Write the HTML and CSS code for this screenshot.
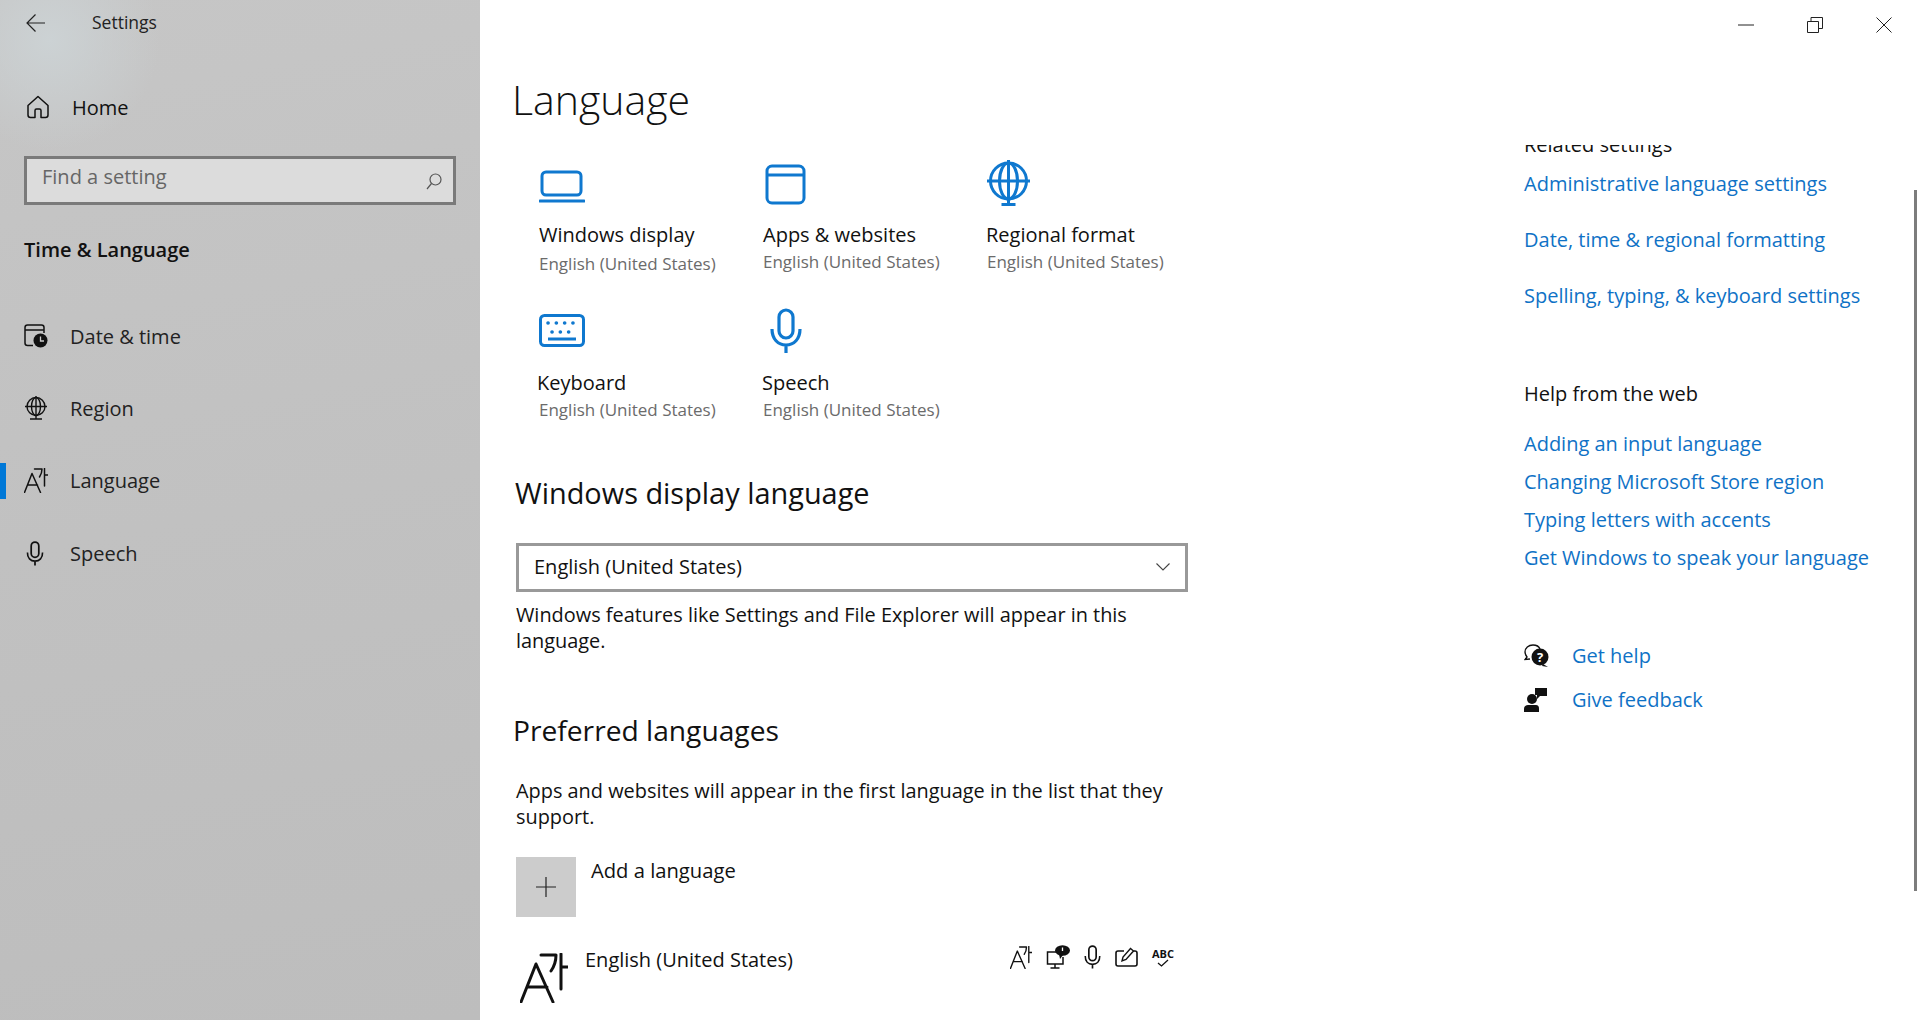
FILE: index.html
```html
<!DOCTYPE html>
<html lang="en">
<head>
<meta charset="utf-8">
<title>Settings</title>
<link rel="stylesheet" href="styles.css">
</head>
<body>
<svg class="defs" width="0" height="0" aria-hidden="true">
  <symbol id="i-aga" viewBox="0 0 48 50">
    <path d="M1 49 16 11 33 49M7 34H27M21 2H36C36 8 34.500 13 31 18M41 1V36M41 14H48" fill="none" stroke="currentColor" stroke-width="3" stroke-linecap="round" stroke-linejoin="round"/>
  </symbol>
  <symbol id="i-mic" viewBox="0 0 32 46">
    <rect x="9" y="2" width="14" height="28" rx="7" fill="none" stroke="currentColor" stroke-width="3.2"/>
    <path d="M2 21C2 31 8 37 16 37S30 31 30 21M16 37V45" fill="none" stroke="currentColor" stroke-width="3.2"/>
  </symbol>
</svg>
<div class="window">
  <aside class="sidebar">
    <div class="app-bar">
      <svg class="back" width="20" height="18" viewBox="0 0 20 18"><path d="M9.500 .5 1 9l8.500 8.500M1 9h18" fill="none" stroke="#222" stroke-width="1.200"/></svg>
      <span class="app-title">Settings</span>
    </div>
    <div class="home">
      <svg width="24" height="24" viewBox="0 0 24 24"><path d="M9 22.500H4.500C2.800 22.500 2 21.500 2 20V10.500L12 1.500l10 9V20c0 1.500-.8 2.500-2.500 2.500H15V15.500C15 14.500 14.500 14 13.500 14h-3C9.500 14 9 14.500 9 15.500Z" fill="none" stroke="#111" stroke-width="1.500" stroke-linejoin="round"/></svg>
      <span>Home</span>
    </div>
    <div class="search">
      <span>Find a setting</span>
      <svg width="16" height="17" viewBox="0 0 16 17"><circle cx="9.500" cy="6.500" r="5.500" fill="none" stroke="#555" stroke-width="1.200"/><path d="M5.500 10.500 1 16" stroke="#555" stroke-width="1.200"/></svg>
    </div>
    <div class="section-title">Time &amp; Language</div>
    <nav class="nav">
      <div class="nav-item">
        <svg width="24" height="24" viewBox="0 0 24 24"><path d="M9 21.500H3.500C2 21.500 1 20.500 1 19V3.500C1 2 2 1 3.500 1h14C19 1 20 2 20 3.500V9M1 6H20" fill="none" stroke="#111" stroke-width="1.500"/><circle cx="16.500" cy="16.500" r="7" fill="#111"/><path d="M16.500 12.500V17H20" fill="none" stroke="#ccc" stroke-width="1.300"/></svg>
        <span>Date &amp; time</span>
      </div>
      <div class="nav-item">
        <svg width="24" height="24" viewBox="0 0 24 24"><circle cx="12" cy="10.500" r="9" fill="none" stroke="#111" stroke-width="1.400"/><ellipse cx="12" cy="10.500" rx="4.500" ry="9" fill="none" stroke="#111" stroke-width="1.400"/><path d="M1 10.500H23M12 0V23M6 23H18" fill="none" stroke="#111" stroke-width="1.400"/></svg>
        <span>Region</span>
      </div>
      <div class="nav-item active">
        <svg class="ic-black" width="24" height="25"><use href="#i-aga"/></svg>
        <span>Language</span>
      </div>
      <div class="nav-item">
        <svg class="ic-black nudge-nav-mic" width="18" height="25" viewBox="0 0 32 46"><use href="#i-mic"/></svg>
        <span>Speech</span>
      </div>
    </nav>
  </aside>
  <main class="main">
    <div class="caption">
      <svg width="16" height="2" viewBox="0 0 16 2"><path d="M0 1H16" stroke="#222" stroke-width="1"/></svg>
      <svg width="16" height="16" viewBox="0 0 16 16"><path d="M.5 4.500h11v11H.5ZM4 4.500V.5h11.500v11H11.500" fill="none" stroke="#222"/></svg>
      <svg width="16" height="16" viewBox="0 0 16 16"><path d="M.5.5l15 15M15.500.5l-15 15" fill="none" stroke="#222"/></svg>
    </div>
    <div class="scrollbar"></div>
    <div class="columns">
      <section class="content">
        <h1 class="page-title">Language</h1>
        <div class="tiles">
          <div class="tile">
            <div class="tile-icon"><svg class="nudge-laptop" width="46" height="33" viewBox="0 0 46 33"><rect x="3" y="2" width="39" height="23" rx="4" fill="none" stroke="#0f78cf" stroke-width="3"/><path d="M1 31H45" stroke="#0f78cf" stroke-width="3.200" stroke-linecap="round"/></svg></div>
            <div class="tile-name">Windows display</div>
            <div class="tile-sub shift-down">English (United States)</div>
          </div>
          <div class="tile">
            <div class="tile-icon"><svg class="nudge-apps" width="41" height="41" viewBox="0 0 41 41"><rect x="2" y="2" width="37" height="37" rx="5" fill="none" stroke="#0f78cf" stroke-width="3"/><path d="M2 11H39" stroke="#0f78cf" stroke-width="3"/></svg></div>
            <div class="tile-name">Apps &amp; websites</div>
            <div class="tile-sub">English (United States)</div>
          </div>
          <div class="tile">
            <div class="tile-icon"><svg width="43" height="46" viewBox="0 0 43 46"><circle cx="21.500" cy="21" r="18" fill="none" stroke="#0f78cf" stroke-width="3"/><ellipse cx="21.500" cy="21" rx="9" ry="18" fill="none" stroke="#0f78cf" stroke-width="3"/><path d="M0 21H43M21.500 0V44M14.500 44.500H28.500" fill="none" stroke="#0f78cf" stroke-width="3"/></svg></div>
            <div class="tile-name outdent">Regional format</div>
            <div class="tile-sub">English (United States)</div>
          </div>
          <div class="tile tile-row2">
            <div class="tile-icon"><svg class="nudge-kbd" width="46" height="33" viewBox="0 0 46 33"><rect x="1.500" y="1.500" width="43" height="30" rx="4" fill="none" stroke="#0f78cf" stroke-width="3"/><path d="M9 9H37M13 18H33" stroke="#0f78cf" stroke-width="3.600" stroke-linecap="round" stroke-dasharray=".1 8.200"/><path d="M9 25H37" stroke="#0f78cf" stroke-width="3"/></svg></div>
            <div class="tile-name outdent-2">Keyboard</div>
            <div class="tile-sub">English (United States)</div>
          </div>
          <div class="tile tile-row2">
            <div class="tile-icon"><svg class="nudge-mic ic-blue" width="32" height="46" viewBox="0 0 32 46"><use href="#i-mic"/></svg></div>
            <div class="tile-name outdent">Speech</div>
            <div class="tile-sub">English (United States)</div>
          </div>
        </div>
        <h2 class="heading">Windows display language</h2>
        <div class="select">
          <span>English (United States)</span>
          <svg width="14" height="8" viewBox="0 0 14 8"><path d="M.5.5 7 7 13.500.5" fill="none" stroke="#444" stroke-width="1.100"/></svg>
        </div>
        <p class="body-text">Windows features like Settings and File Explorer will appear in this language.</p>
        <h2 class="heading heading-pref">Preferred languages</h2>
        <p class="body-text body-pref">Apps and websites will appear in the first language in the list that they support.</p>
        <div class="add">
          <div class="add-box"><svg width="20" height="20" viewBox="0 0 20 20"><path d="M10 0V20M0 10H20" stroke="#222" stroke-width="1.200"/></svg></div>
          <span>Add a language</span>
        </div>
        <div class="lang">
          <svg class="lang-icon ic-black" width="48" height="50"><use href="#i-aga"/></svg>
          <span class="lang-name">English (United States)</span>
          <div class="lang-caps">
            <svg class="ic-black" width="22" height="23"><use href="#i-aga"/></svg>
            <svg width="24" height="24" viewBox="0 0 24 24"><path d="M13 7H1.500V19H17V12M9 19V23M4.500 23H13.500" fill="none" stroke="#111" stroke-width="1.500"/><ellipse cx="16.500" cy="5.500" rx="7.500" ry="5.200" fill="#111"/><path d="M13 9l1 5 3-4Z" fill="#111"/><path d="M16.500 2.500V6" stroke="#fff" stroke-width="1.300"/></svg>
            <svg class="ic-black" width="17" height="24" viewBox="0 0 32 46"><use href="#i-mic"/></svg>
            <svg width="23" height="22" viewBox="0 0 23 22"><path d="M9 5H3C2 5 1 6 1 7V18C1 19 2 20 3 20H20C21 20 22 19 22 18V7C22 6 21 5 20 5H18.500" fill="none" stroke="#111" stroke-width="1.600"/><path d="M7 15 8 11 15.500 2.500 18.500 5 11 13.500Z" fill="none" stroke="#111" stroke-width="1.400"/></svg>
            <div class="abc"><span>ABC</span><svg width="12" height="8" viewBox="0 0 12 8"><path d="M1 4 4.500 7 11 1" fill="none" stroke="#111" stroke-width="1.300"/></svg></div>
          </div>
        </div>
      </section>
      <aside class="side">
        <div class="side-clip">
          <div class="clipped">Related settings</div>
        </div>
        <a class="link link-rel">Administrative language settings</a>
        <a class="link link-rel">Date, time &amp; regional formatting</a>
        <a class="link link-rel">Spelling, typing, &amp; keyboard settings</a>
        <div class="side-head">Help from the web</div>
        <a class="link link-web">Adding an input language</a>
        <a class="link link-web">Changing Microsoft Store region</a>
        <a class="link link-web">Typing letters with accents</a>
        <a class="link link-web">Get Windows to speak your language</a>
        <div class="help">
          <div class="help-row">
            <svg width="25" height="24" viewBox="0 0 25 24"><path d="M9 1C4.500 1 1 4 1 8c0 2 .8 3.500 2 5L1 15.500 6 15" fill="none" stroke="#111" stroke-width="1.400"/><path d="M9 1c3 0 6 1.500 7 4" fill="none" stroke="#111" stroke-width="1.400"/><circle cx="16" cy="13" r="8.500" fill="#111"/><path d="M19 20l5 3-6-1Z" fill="#111"/><text class="help-q" x="16" y="17.500" text-anchor="middle">?</text></svg>
            <a class="link">Get help</a>
          </div>
          <div class="help-row">
            <svg width="25" height="24" viewBox="0 0 25 24"><circle cx="8" cy="11" r="5" fill="#111"/><path d="M0 24V21C0 18 2 17 4 17H12C14 17 15 18 15 21V24Z" fill="#111"/><path d="M11 0H23V8H16L13 11V7H11Z" fill="#111"/></svg>
            <a class="link">Give feedback</a>
          </div>
        </div>
      </aside>
    </div>
  </main>
</div>
</body>
</html>
```

FILE: styles.css
```css
* { box-sizing: border-box; }
html, body { margin: 0; padding: 0; }
body {
  width: 1920px;
  height: 1020px;
  overflow: hidden;
  background: #fff;
  color: #111;
  font-family: "Open Sans", "Noto Sans", sans-serif;
}
.defs { position: absolute; }
.ic-black { color: #111; }
.ic-blue { color: #0f78cf; }
.window { display: flex; height: 1020px; }

/* Sidebar */
.sidebar {
  width: 480px;
  flex: none;
  background:
    radial-gradient(circle at 50px 40px, #ccd2d4 0, rgba(204, 210, 212, 0) 110px),
    linear-gradient(170deg, #c6c6c6 0%, #c1c1c1 50%, #bdbdbd 100%);
}
.app-bar { display: flex; align-items: center; height: 46px; padding-left: 26px; }
.app-title { margin: -2px 0 0 46px; font-size: 17.500px; color: #222; }
.home { display: flex; align-items: center; gap: 22px; height: 44px; margin-top: 39px; padding-left: 26px; font-size: 20px; }
.search {
  display: flex;
  align-items: center;
  justify-content: space-between;
  width: 432px;
  height: 49px;
  margin: 27px 0 0 24px;
  padding: 0 11px 0 15px;
  border: 3px solid #7a7a7a;
  background: #dcdcdc;
  font-size: 20px;
  color: #666;
}
.search span { margin-top: -8px; }
.search svg { margin-top: 2px; }
.section-title { height: 30px; line-height: 30px; margin: 30px 0 0 24px; font-size: 20px; font-weight: 600; color: #111; }
.nav { margin-top: 35px; }
.nav-item { position: relative; display: flex; align-items: center; height: 72.330px; padding-left: 24px; font-size: 20px; color: #222; }
.nav-item span { position: absolute; left: 70px; }
.nav-item.active::before { content: ""; position: absolute; left: 0; top: 18px; width: 6px; height: 36px; background: #0078d7; }
.nudge-nav-mic { margin-left: 2px; }

/* Main */
.main { position: relative; flex: 1; min-width: 0; }
.caption { position: absolute; top: 17px; right: 28px; display: flex; align-items: center; gap: 53px; height: 16px; }
.scrollbar { position: absolute; top: 190px; right: 3px; width: 3px; height: 701px; background: #7c7c7c; }
.columns { display: flex; }
.content { width: 1044px; flex: none; padding-left: 36px; }
.page-title { margin: 70px 0 0 -4px; height: 58px; line-height: 58px; font-size: 41px; font-weight: 300; color: #111; }
.tiles { display: grid; grid-template-columns: repeat(3, 224px); margin: 33px 0 0 23px; }
.tile { height: 148px; }
.tile-row2 { height: 164px; }
.tile-icon { display: flex; align-items: flex-end; height: 45px; }
.nudge-laptop { margin-bottom: 3px; }
.nudge-apps { margin: 0 0 1px 2px; }
.nudge-mic { margin-left: 7px; }
.nudge-kbd { margin-bottom: 7px; }
.tile-name { height: 28px; margin-top: 15px; line-height: 28px; font-size: 20px; }
.tile-sub { height: 24px; margin-top: 1px; line-height: 24px; font-size: 17px; color: #6b6b6b; }
.shift-down { margin-top: 3px; }
.outdent { margin-left: -1px; }
.outdent-2 { margin-left: -2px; }
.heading { margin: 0 0 0 -1px; height: 40px; line-height: 40px; font-size: 28.900px; font-weight: 400; color: #111; }
.select {
  display: flex;
  align-items: center;
  justify-content: space-between;
  width: 672px;
  height: 49px;
  margin-top: 30px;
  padding: 0 15px 2px 15px;
  border: 3px solid #999;
  font-size: 20px;
}
.body-text { width: 680px; margin: 10px 0 0; font-size: 19.900px; line-height: 26px; color: #111; }
.heading-pref { margin: 56px 0 0 -3px; font-size: 28.200px; }
.body-pref { margin-top: 28px; }
.add { display: flex; gap: 15px; height: 60px; margin-top: 27px; font-size: 20.200px; line-height: 26px; }
.add-box { display: flex; align-items: center; justify-content: center; width: 60px; height: 60px; background: #ccc; }
.lang { position: relative; display: flex; height: 60px; margin-top: 32px; font-size: 20px; }
.lang-icon { margin: 4px 0 0 4px; }
.lang-name { margin: -2px 0 0 17px; line-height: 26px; }
.lang-caps { position: absolute; left: 494px; top: -4px; display: flex; align-items: center; gap: 14px; }
.abc { display: flex; flex-direction: column; align-items: center; font-size: 11px; font-weight: 700; line-height: 11px; }
.help-q { fill: #fff; font-size: 13px; font-weight: 700; font-family: "Open Sans", sans-serif; }

/* Right column */
.side { width: 396px; flex: none; padding-top: 145px; }
.side-clip { height: 25px; overflow: hidden; }
.clipped { margin-top: -13px; line-height: 26px; font-size: 20px; color: #111; }
.link { display: block; color: #0f72c6; font-size: 20px; line-height: 28px; white-space: nowrap; }
.link-rel { margin-bottom: 28px; }
.side-head { margin-top: 70px; height: 28px; line-height: 28px; font-size: 20px; color: #111; }
.side-head + .link { margin-top: 22px; }
.link-web { height: 38px; }
.help { margin-top: 52px; }
.help-row { display: flex; align-items: center; gap: 23px; height: 44px; }
```
